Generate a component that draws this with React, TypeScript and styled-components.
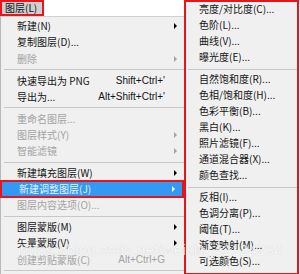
import React from "react";
import styled, { createGlobalStyle, css } from "styled-components";

const GlobalStyle = createGlobalStyle`
  html, body { margin: 0; padding: 0; background: #ffffff; }
  body { font-family: "Noto Sans CJK SC", "Microsoft YaHei", sans-serif; }
`;

const Page = styled.div`
  position: relative;
  width: 300px;
  height: 274px;
  display: flex;
  overflow: hidden;
  background: #ffffff;
`;

const LeftCol = styled.div`
  width: 184px;
  display: flex;
  flex-direction: column;
`;

const MenuBar = styled.div`
  height: 16px;
  display: flex;
  background: #ffffff;
`;

const BarTab = styled.div`
  width: 44px;
  box-sizing: border-box;
  border: 2px solid #e8141c;
  background: #cfcfcf;
  font-size: 10px;
  line-height: 12px;
  color: #111;
  padding-left: 3px;
`;

const Dropdown = styled.div`
  flex: 1;
  background: #f0f0f0;
  border-left: 1px solid #b8b8b8;
  border-top: 1px solid #d0d0d0;
  padding-top: 1px;
  display: flex;
  flex-direction: column;
`;

const Item = styled.div<{ $disabled?: boolean; $active?: boolean }>`
  height: 16.3px;
  box-sizing: border-box;
  display: flex;
  align-items: center;
  padding-left: 16px;
  padding-right: 4px;
  font-size: 10px;
  line-height: 12px;
  color: ${(p) => (p.$disabled ? "#a3a3a3" : "#141414")};
  ${(p) =>
    p.$active &&
    css`
      height: 18px;
      margin: -1px 0 -1px -1px;
      padding-left: 17px;
      background: #3399f3;
      border: 2px solid #e8141c;
      color: #eaf4ff;
    `}
`;

const Label = styled.span`
  flex: 1;
  white-space: nowrap;
`;

const Shortcut = styled.span`
  font-family: "Liberation Sans", Arial, sans-serif;
  font-size: 10px;
  white-space: nowrap;
  margin-right: 9px;
`;

const Arrow = styled.span<{ $show?: boolean }>`
  width: 0;
  height: 0;
  border-top: 3px solid transparent;
  border-bottom: 3px solid transparent;
  border-left: 3px solid currentColor;
  margin-right: 3px;
  visibility: ${(p) => (p.$show ? "visible" : "hidden")};
`;

const ArrowColor = styled.span<{ $disabled?: boolean; $active?: boolean }>`
  display: flex;
  color: ${(p) => (p.$active ? "#ffffff" : p.$disabled ? "#a3a3a3" : "#000")};
`;

const Sep = styled.div<{ $inset?: number }>`
  height: 5.5px;
  display: flex;
  align-items: center;
  padding-left: ${(p) => p.$inset ?? 3}px;
  &::after {
    content: "";
    flex: 1;
    height: 1px;
    background: #c8c8c8;
  }
`;

const SubMenu = styled.div`
  width: 115px;
  height: 274px;
  box-sizing: border-box;
  border: 2px solid #e8141c;
  border-bottom-width: 1px;
  background: #f0f0f0;
  display: flex;
  flex-direction: column;
`;

const SubItem = styled.div`
  height: 16.1px;
  box-sizing: border-box;
  padding-bottom: 2px;
  display: flex;
  align-items: center;
  padding-left: 13px;
  font-size: 10px;
  line-height: 12px;
  color: #141414;
  white-space: nowrap;
`;

const Watermark = styled.div`
  position: absolute;
  left: 20px;
  top: 241px;
  font-family: "Liberation Sans", Arial, sans-serif;
  font-size: 15px;
  letter-spacing: 0.2px;
  color: rgba(255, 255, 255, 0.85);
  text-shadow: 0 0 1px rgba(0, 0, 0, 0.18);
  pointer-events: none;
  white-space: nowrap;
`;

type Entry =
  | { sep: true }
  | {
      sep?: false;
      label: string;
      shortcut?: string;
      arrow?: boolean;
      disabled?: boolean;
      active?: boolean;
    };

const leftItems: Entry[] = [
  { label: "新建(N)", arrow: true },
  { label: "复制图层(D)..." },
  { label: "删除", arrow: true, disabled: true },
  { sep: true },
  { label: "快速导出为 PNG", shortcut: "Shift+Ctrl+'" },
  { label: "导出为...", shortcut: "Alt+Shift+Ctrl+'" },
  { sep: true },
  { label: "重命名图层...", disabled: true },
  { label: "图层样式(Y)", arrow: true, disabled: true },
  { label: "智能滤镜", arrow: true, disabled: true },
  { sep: true },
  { label: "新建填充图层(W)", arrow: true },
  { label: "新建调整图层(J)", arrow: true, active: true },
  { label: "图层内容选项(O)...", disabled: true },
  { sep: true },
  { label: "图层蒙版(M)", arrow: true },
  { label: "矢量蒙版(V)", arrow: true },
  { label: "创建剪贴蒙版(C)", shortcut: "Alt+Ctrl+G", disabled: true },
  { sep: true },
];

const subItems: (string | null)[] = [
  "亮度/对比度(C)...",
  "色阶(L)...",
  "曲线(V)...",
  "曝光度(E)...",
  null,
  "自然饱和度(R)...",
  "色相/饱和度(H)...",
  "色彩平衡(B)...",
  "黑白(K)...",
  "照片滤镜(F)...",
  "通道混合器(X)...",
  "颜色查找...",
  null,
  "反相(I)...",
  "色调分离(P)...",
  "阈值(T)...",
  "渐变映射(M)...",
  "可选颜色(S)...",
];

export default function App() {
  return (
    <>
      <GlobalStyle />
      <Page>
        <LeftCol>
          <MenuBar>
            <BarTab>图层(L)</BarTab>
          </MenuBar>
          <Dropdown>
            {leftItems.map((e, i) =>
              e.sep ? (
                <Sep key={i} />
              ) : (
                <Item key={i} $disabled={e.disabled} $active={e.active}>
                  <Label>{e.label}</Label>
                  {e.shortcut && <Shortcut>{e.shortcut}</Shortcut>}
                  <ArrowColor $disabled={e.disabled} $active={e.active}>
                    <Arrow $show={e.arrow} />
                  </ArrowColor>
                </Item>
              )
            )}
          </Dropdown>
        </LeftCol>
        <SubMenu>
          {subItems.map((s, i) =>
            s === null ? <Sep key={i} $inset={2} /> : <SubItem key={i}>{s}</SubItem>
          )}
        </SubMenu>
        <Watermark>https://blog.csdn.net/weixin_42124234</Watermark>
      </Page>
    </>
  );
}
